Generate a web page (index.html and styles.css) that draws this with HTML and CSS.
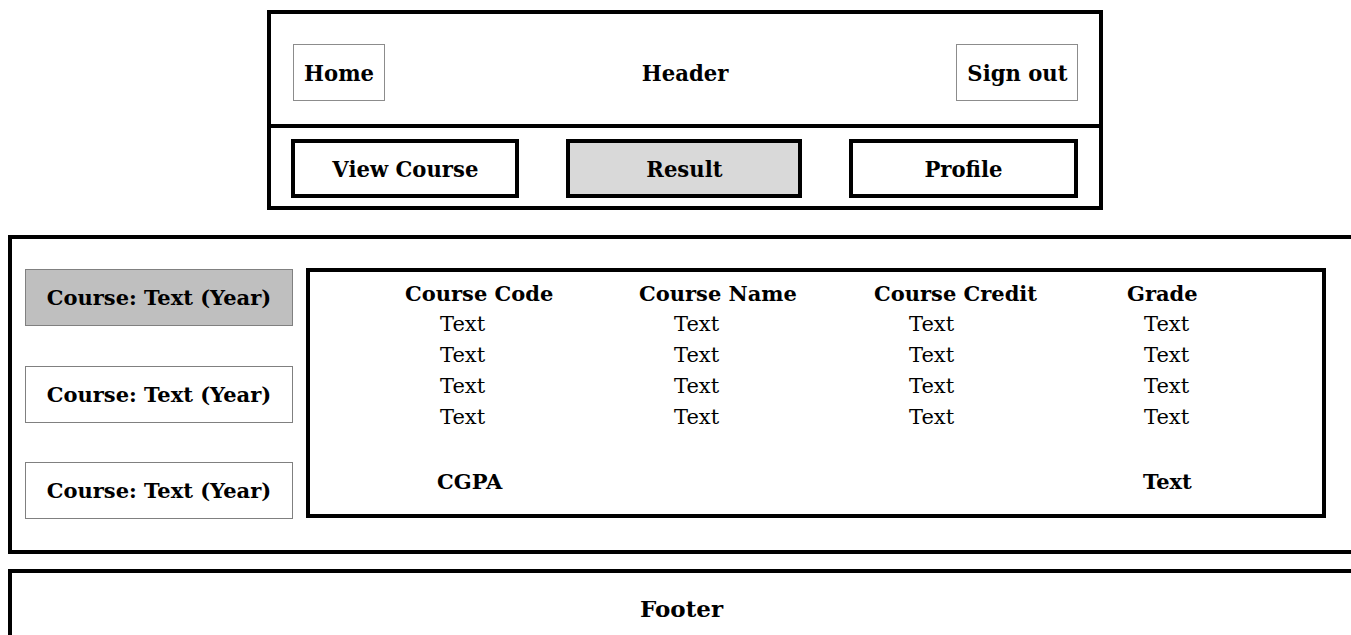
FILE: index.html
```html
<!DOCTYPE html>
<html>
<head>
<meta http-equiv="Content-Type" content="text/html; charset=utf-8"/>
<title>Result</title>
<link rel="stylesheet" href="styles.css">
</head>
<body>

<header class="top">
  <div class="top-bar">
    <a class="top-link top-home" href="#"><span class="narrow">Home</span></a>
    <h1 class="top-title"><span class="narrow">Header</span></h1>
    <a class="top-link top-signout" href="#"><span class="narrow">Sign out</span></a>
  </div>
  <nav class="tabs">
    <a class="tab tab-course" href="#"><span class="narrow">View Course</span></a>
    <a class="tab tab-result tab-active" href="#"><span class="narrow">Result</span></a>
    <a class="tab tab-profile" href="#"><span class="narrow">Profile</span></a>
  </nav>
</header>

<main class="main">
  <ul class="courses">
    <li class="course course-active">Course: Text (Year)</li>
    <li class="course">Course: Text (Year)</li>
    <li class="course">Course: Text (Year)</li>
  </ul>

  <section class="results">
    <div class="row row-head">
      <div class="cell">Course Code</div>
      <div class="cell">Course Name</div>
      <div class="cell">Course Credit</div>
      <div class="cell cell-grade">Grade</div>
    </div>
    <div class="row">
      <div class="cell">Text</div>
      <div class="cell">Text</div>
      <div class="cell">Text</div>
      <div class="cell cell-grade">Text</div>
    </div>
    <div class="row">
      <div class="cell">Text</div>
      <div class="cell">Text</div>
      <div class="cell">Text</div>
      <div class="cell cell-grade">Text</div>
    </div>
    <div class="row">
      <div class="cell">Text</div>
      <div class="cell">Text</div>
      <div class="cell">Text</div>
      <div class="cell cell-grade">Text</div>
    </div>
    <div class="row">
      <div class="cell">Text</div>
      <div class="cell">Text</div>
      <div class="cell">Text</div>
      <div class="cell cell-grade">Text</div>
    </div>
    <div class="row row-total">
      <div class="cell cell-cgpa">CGPA</div>
      <div class="cell"></div>
      <div class="cell"></div>
      <div class="cell cell-grade">Text</div>
    </div>
  </section>
</main>

<footer class="footer">
  <span class="footer-text">Footer</span>
</footer>

</body>
</html>
```

FILE: styles.css
```css
body {
  margin: 0;
  background-color: white;
  color: #000;
  font-family: "DejaVu Serif", "Liberation Serif", serif;
  font-size: 21px;
  overflow: hidden;
}

a {
  color: #000;
  text-decoration: none;
}

/* header block */
.top {
  box-sizing: border-box;
  width: 836px;
  margin: 10px 0 0 267px;
  border: 4px solid #000;
}

.top-bar {
  display: grid;
  grid-template-columns: 1fr auto 1fr;
  align-items: center;
  height: 114px;
  box-sizing: border-box;
  padding: 7px 21px 0 22px;
  border-bottom: 4px solid #000;
}

.top-link,
.top-title,
.tab,
.footer-text {
  font-weight: bold;
  font-size: 23px;
}

/* the header texts are drawn a bit condensed */
.narrow {
  display: inline-block;
  transform: scaleX(0.92);
}

.top-link {
  display: flex;
  align-items: center;
  justify-content: center;
  box-sizing: border-box;
  height: 57px;
  border: 1px solid #8c8c8c;
}

.top-home {
  width: 92px;
  justify-self: start;
}

.top-signout {
  width: 122px;
  justify-self: end;
}

.top-title {
  margin: 0;
  text-align: center;
}

.tabs {
  display: flex;
  justify-content: space-between;
  padding: 11px 21px 8px 20px;
}

.tab {
  display: flex;
  align-items: center;
  justify-content: center;
  box-sizing: border-box;
  height: 59px;
  border: 4px solid #000;
}

.tab-course { width: 228px; }
.tab-result { width: 236px; }
.tab-profile { width: 229px; }

.tab-active {
  background-color: #d9d9d9;
}

/* main block */
.main {
  display: flex;
  align-items: flex-start;
  margin: 25px 0 0 8px;
  padding: 29px 0 31px 13px;
  border: 4px solid #000;
  border-right: none;
}

.courses {
  display: flex;
  flex-direction: column;
  gap: 39.5px;
  width: 268px;
  margin: 1px 0 0;
  padding: 0;
  list-style: none;
}

.course {
  display: flex;
  align-items: center;
  justify-content: center;
  box-sizing: border-box;
  height: 57px;
  border: 1px solid #808080;
  font-weight: bold;
}

.course-active {
  background-color: #bfbfbf;
}

.results {
  box-sizing: border-box;
  width: 1020px;
  height: 250px;
  margin-left: 13px;
  padding: 6px 0 0 95px;
  border: 4px solid #000;
}

.row {
  display: grid;
  grid-template-columns: 234px 235px 253px auto;
  line-height: 31px;
}

.row .cell {
  padding-left: 35px;
}

.row .cell-grade {
  padding-left: 17px;
}

.row-head .cell,
.row-head .cell-grade {
  padding-left: 0;
  font-weight: bold;
}

.row-total {
  margin-top: 33px;
  font-weight: bold;
}

.row-total .cell-cgpa {
  padding-left: 32px;
}

.row-total .cell-grade {
  padding-left: 16px;
}

/* footer */
.footer {
  height: 80px;
  margin: 15px 0 0 8px;
  padding-top: 24px;
  border-top: 4px solid #000;
  border-left: 4px solid #000;
  text-align: center;
  line-height: 24px;
}
```
